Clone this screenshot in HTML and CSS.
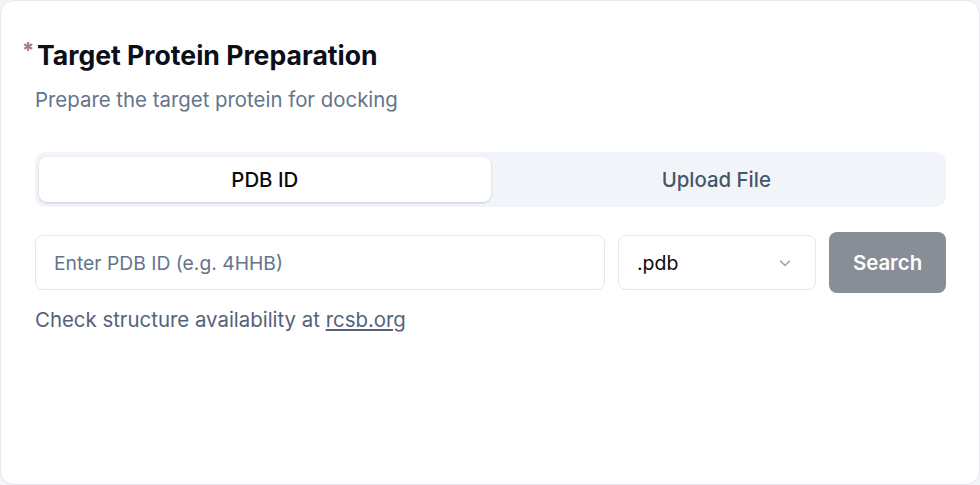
FILE: index.html
```html
<!DOCTYPE html>
<html>
<head>
<meta charset="utf-8">
<link rel="stylesheet" href="styles.css">
</head>
<body>
<div class="card">
  <h2 class="title"><span class="req">*</span>Target Protein Preparation</h2>
  <p class="subtitle">Prepare the target protein for docking</p>
  <div class="tabs">
    <button class="tab active">PDB ID</button>
    <button class="tab">Upload File</button>
  </div>
  <div class="row">
    <div class="input">Enter PDB ID (e.g. 4HHB)</div>
    <div class="select">
      <span>.pdb</span>
      <svg class="chev" width="16" height="16" viewBox="0 0 16 16"><path d="M3.5 6l4.5 4.5L12.5 6" fill="none" stroke="#9ca3af" stroke-width="1.5" stroke-linecap="round" stroke-linejoin="round"/></svg>
    </div>
    <button class="search">Search</button>
  </div>
  <p class="help">Check structure availability at <a href="#">rcsb.org</a></p>
</div>
</body>
</html>
```

FILE: styles.css
```css
* { box-sizing: border-box; }
html, body { margin: 0; padding: 0; background: #f3f4f6; }
body { font-family: Inter, "Noto Sans", sans-serif; }
.card {
  width: 980px;
  height: 485px;
  background: #fff;
  border: 1px solid #e5e7eb;
  border-radius: 14px;
  padding: 34px 33px 0 34px;
}
.title {
  position: relative;
  margin: 0;
  font-size: 26.6px;
  line-height: 40px;
  font-weight: 700;
  color: #0b0f1a;
  padding-left: 2px;
}
.req {
  position: absolute;
  left: -13px;
  top: -5px;
  color: #a47a80;
  font-size: 22px;
  font-weight: 700;
}
.subtitle {
  margin: 11px 0 0;
  font-size: 20.4px;
  line-height: 28px;
  color: #64748b;
}
.tabs {
  margin-top: 38px;
  display: grid;
  grid-template-columns: 1fr 1fr;
  background: #f1f5f9;
  border-radius: 10px;
  padding: 5px 4px;
  height: 55px;
}
.tab {
  border: 0;
  background: transparent;
  font-family: inherit;
  font-size: 20.4px;
  font-weight: 500;
  color: #475569;
  border-radius: 8px;
  cursor: pointer;
}
.tab.active {
  background: #fff;
  color: #0a0a0a;
  box-shadow: 0 1px 3px rgba(0,0,0,0.12), 0 1px 2px rgba(0,0,0,0.06);
}
.row {
  margin-top: 25px;
  display: flex;
  align-items: center;
  gap: 13px;
}
.input {
  flex: 1;
  height: 55px;
  border: 1px solid #e2e8f0;
  border-radius: 8px;
  display: flex;
  align-items: center;
  padding: 0 18px;
  font-size: 19.3px;
  color: #64748b;
}
.select {
  width: 198px;
  height: 55px;
  border: 1px solid #e2e8f0;
  border-radius: 8px;
  display: flex;
  align-items: center;
  justify-content: space-between;
  padding: 0 22px 0 18px;
  font-size: 19.5px;
  color: #0a0a0a;
}
.search {
  width: 117px;
  height: 61px;
  border: 0;
  border-radius: 8px;
  background: #898d96;
  color: #fff;
  font-family: inherit;
  font-size: 20.4px;
  font-weight: 600;
}
.help {
  margin: 13px 0 0;
  font-size: 20.4px;
  line-height: 28px;
  color: #55627a;
}
.help a { color: inherit; text-decoration: underline; }
```
